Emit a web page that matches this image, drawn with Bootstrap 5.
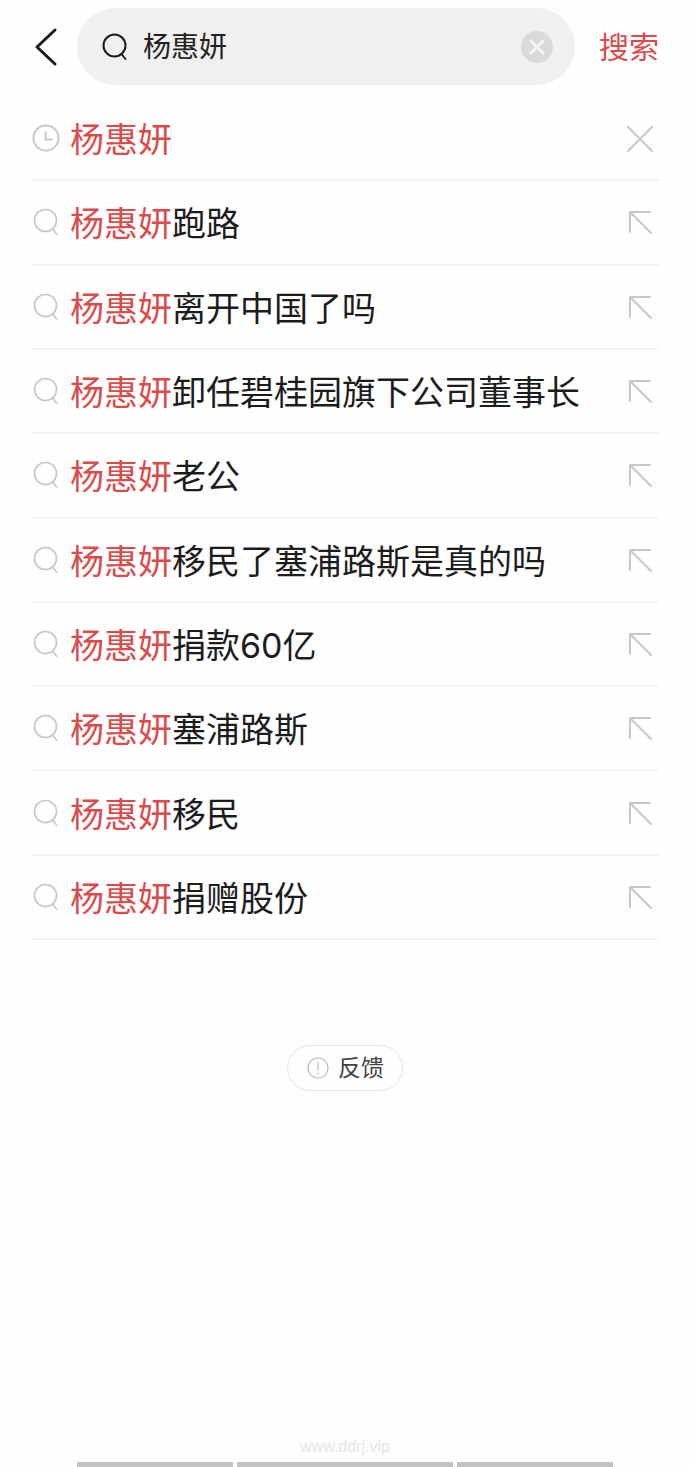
<!DOCTYPE html>
<html lang="zh-CN">
<head>
<meta charset="utf-8">
<meta name="viewport" content="width=device-width, initial-scale=1">
<title>搜索</title>
<link href="https://cdn.jsdelivr.net/npm/bootstrap@5.3.0/dist/css/bootstrap.min.css" rel="stylesheet">
<style>
  body { font-family: Inter, "Noto Sans CJK SC", sans-serif; background: #fefefe; color: #1c1c1c; }
  svg { display: block; fill: none; stroke: currentColor; stroke-linecap: round; stroke-linejoin: round; }
  .accent { color: #dc4a4a; }
  .topbar { padding: 8px 31px 12px; }
  .back { width: 46px; color: #1c1c1c; }
  .search-pill { height: 77px; background: #f0f0f0; padding: 0 21px 0 24px; }
  .search-pill input { font-size: 28px; line-height: 40px; color: #222; margin-left: 14px; }
  .search-pill input:focus { outline: 0; }
  .go { font-size: 30px; line-height: 40px; margin-left: 24px; }
  .suggestions { grid-auto-rows: 1fr; min-height: 843px; margin: 0 31px 105px; }
  .suggestion { border-bottom: 2px solid #f4f4f4; color: #c8c8c8; }
  .suggestion a { font-size: 34px; line-height: 48px; color: #1c1c1c; gap: 9px; }
  .suggestion a > span { padding-top: 4px; }
  .suggestion a svg { color: #c8c8c8; }
  .suggestion button, .suggestion button:hover { color: #c8c8c8; padding: 2px 5px 0 0; }
  .feedback { height: 46px; padding: 0 18px; gap: 8px; font-size: 23px; line-height: 32px; color: #444; border: 1px solid #e4e4e4; }
  .feedback svg { color: #bbb; }
  .site { font: 16px/20px "Liberation Sans", sans-serif; color: #e6e6e6; margin-bottom: 5px; }
  .dock { gap: 4px; padding: 0 77px; }
  .dock span { height: 5px; background: #c2c2c2; flex: 156 1 0; }
  .dock span:nth-child(2) { flex-grow: 216; }
</style>
</head>
<body>
<svg class="d-none" aria-hidden="true">
  <symbol id="lens" viewBox="0 0 28 28"><circle cx="13.5" cy="12.5" r="11"/><path d="M20.500 21L24.500 26"/></symbol>
  <symbol id="fill-in" viewBox="0 0 26 26"><path d="M3 22V2H23M3 2L24 23"/></symbol>
</svg>
<div class="d-flex flex-column min-vh-100">
  <form class="topbar d-flex align-items-center" role="search" onsubmit="return false">
    <button type="button" class="back btn p-0 border-0 flex-shrink-0" aria-label="返回">
      <svg width="28" height="40" viewBox="0 0 28 40" stroke-width="3"><path d="M24 3L6 20L24 37"/></svg>
    </button>
    <div class="search-pill d-flex align-items-center flex-grow-1 rounded-pill">
      <svg class="flex-shrink-0" width="28" height="28" stroke-width="2"><use href="#lens"/></svg>
      <input class="flex-grow-1 border-0 bg-transparent p-0 w-100" type="text" value="杨惠妍" aria-label="搜索内容">
      <button type="reset" class="btn p-0 border-0" aria-label="清空">
        <svg width="34" height="34" viewBox="0 0 34 34"><circle cx="17" cy="17" r="16" fill="#dadada" stroke="none"/><path d="M11 11L23 23M23 11L11 23" stroke="#f4f4f4" stroke-width="3"/></svg>
      </button>
    </div>
    <button type="submit" class="go accent btn p-0 border-0 flex-shrink-0">搜索</button>
  </form>

  <ul class="suggestions list-unstyled d-grid" id="suggestions">
    <li class="suggestion d-flex align-items-center">
      <a href="#" class="d-flex align-items-center flex-grow-1 text-decoration-none">
        <svg width="30" height="30" viewBox="0 0 30 30" stroke-width="2"><circle cx="15" cy="15" r="12.500"/><path d="M14.500 9V16.500H21"/></svg>
        <span class="accent">杨惠妍</span>
      </a>
      <button type="button" class="btn border-0" aria-label="删除"><svg width="28" height="28" viewBox="0 0 28 28" stroke-width="2"><path d="M2 2L26 26M26 2L2 26"/></svg></button>
    </li>
  </ul>

  <button type="button" class="feedback btn rounded-pill d-flex align-items-center align-self-center">
    <svg width="24" height="24" viewBox="0 0 24 24" stroke-width="1.200"><circle cx="12" cy="12" r="10"/><path d="M12 6V14M12 17V18"/></svg>反馈
  </button>

  <footer class="mt-auto">
    <p class="site text-center">www.ddrj.vip</p>
    <div class="dock d-flex"><span></span><span></span><span></span></div>
  </footer>
</div>
<script>
  const endings = ["跑路", "离开中国了吗", "卸任碧桂园旗下公司董事长", "老公", "移民了塞浦路斯是真的吗", "捐款60亿", "塞浦路斯", "移民", "捐赠股份"];
  document.getElementById("suggestions").insertAdjacentHTML("beforeend", endings.map(t => `
    <li class="suggestion d-flex align-items-center">
      <a href="#" class="d-flex align-items-center flex-grow-1 text-decoration-none">
        <svg width="30" height="28" stroke-width="1.7"><use href="#lens"/></svg>
        <span><span class="accent">杨惠妍</span>${t}</span>
      </a>
      <button type="button" class="btn border-0" aria-label="填入"><svg width="28" height="26" stroke-width="2"><use href="#fill-in"/></svg></button>
    </li>`).join(""));
</script>
<script src="https://cdn.jsdelivr.net/npm/bootstrap@5.3.0/dist/js/bootstrap.bundle.min.js"></script>
</body>
</html>
